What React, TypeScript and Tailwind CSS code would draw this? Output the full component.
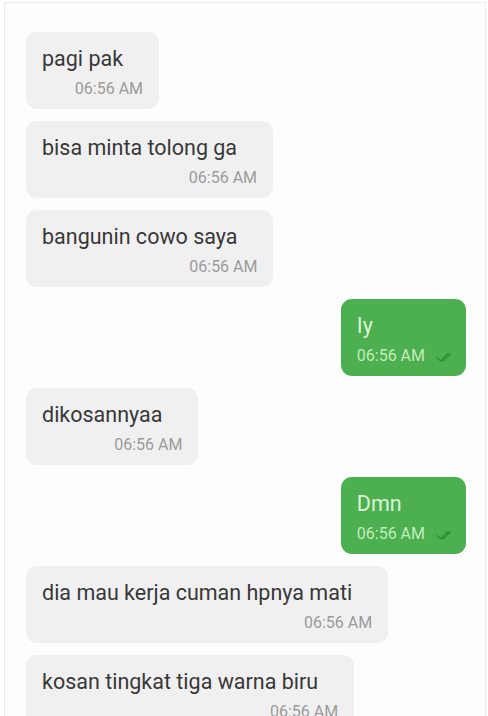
import React from "react";

type Msg = { text: string; time: string; mine?: boolean };

const messages: Msg[] = [
  { text: "pagi pak", time: "06:56 AM" },
  { text: "bisa minta tolong ga", time: "06:56 AM" },
  { text: "bangunin cowo saya", time: "06:56 AM" },
  { text: "Iy", time: "06:56 AM", mine: true },
  { text: "dikosannyaa", time: "06:56 AM" },
  { text: "Dmn", time: "06:56 AM", mine: true },
  { text: "dia mau kerja cuman hpnya mati", time: "06:56 AM" },
  { text: "kosan tingkat tiga warna biru", time: "06:56 AM" },
];

const DoubleCheck = () => (
  <svg width="18" height="12" viewBox="0 0 18 12" fill="none" className="ml-[11px] mt-[1px]">
    <path d="M1 6.5 L4.5 10 L12 2.5" stroke="#2f8a35" strokeWidth="1.1" strokeLinecap="round" strokeLinejoin="round" />
    <path d="M5.5 8.5 L7 10 L14.5 2.5" stroke="#2f8a35" strokeWidth="1.1" strokeLinecap="round" strokeLinejoin="round" />
  </svg>
);

const Bubble = ({ msg }: { msg: Msg }) => {
  if (msg.mine) {
    return (
      <div className="self-end rounded-[11px] bg-[#4caf50] pt-[13px] pb-[10px] pl-4 pr-[12px]">
        <div className="text-[21.5px] leading-[28px] text-[#dcf5d6]">{msg.text}</div>
        <div className="mt-[6px] flex items-center">
          <span className="text-[16px] leading-[20px] text-[#c3ecbc]">{msg.time}</span>
          <DoubleCheck />
        </div>
      </div>
    );
  }
  return (
    <div className="self-start rounded-[11px] bg-[#f0f0f0] pt-[13px] pb-[10px] pl-4 pr-[16px]">
      <div className="pr-5 text-[21.5px] leading-[28px] text-[#383838]">{msg.text}</div>
      <div className="mt-[6px] text-right text-[16px] leading-[20px] text-[#9b9b9b]">{msg.time}</div>
    </div>
  );
};

export default function App() {
  return (
    <div
      className="h-[716px] w-[488px] overflow-hidden bg-white pt-[2px] pl-[4px] pr-[2px]"
      style={{ fontFamily: "Roboto, 'Liberation Sans', sans-serif" }}
    >
      <div className="h-full border-l border-t border-r border-[#ececec] bg-[#fdfdfd] pt-[29px] pl-[21px] pr-[19px]">
        <div className="flex flex-col gap-3">
          {messages.map((m, i) => (
            <Bubble key={i} msg={m} />
          ))}
        </div>
      </div>
    </div>
  );
}
